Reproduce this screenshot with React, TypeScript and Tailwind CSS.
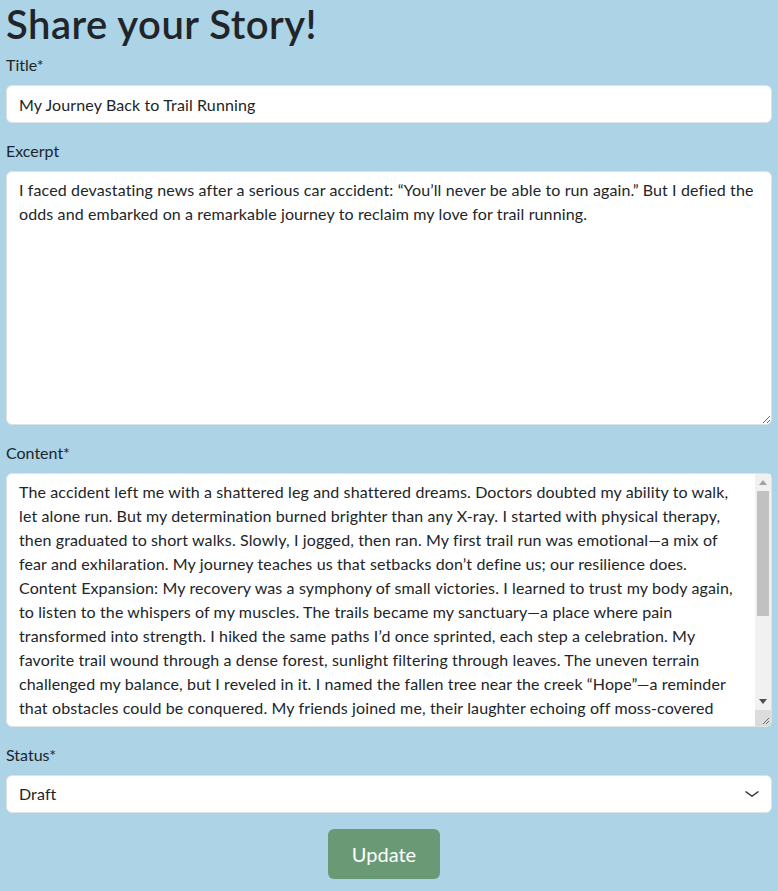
import { useState } from 'react'

const excerptText =
  'I faced devastating news after a serious car accident: “You’ll never be able to run again.” But I defied the odds and embarked on a remarkable journey to reclaim my love for trail running.'

const contentText =
  'The accident left me with a shattered leg and shattered dreams. Doctors doubted my ability to walk, let alone run. But my determination burned brighter than any X-ray. I started with physical therapy, then graduated to short walks. Slowly, I jogged, then ran. My first trail run was emotional—a mix of fear and exhilaration. My journey teaches us that setbacks don’t define us; our resilience does. Content Expansion: My recovery was a symphony of small victories. I learned to trust my body again, to listen to the whispers of my muscles. The trails became my sanctuary—a place where pain transformed into strength. I hiked the same paths I’d once sprinted, each step a celebration. My favorite trail wound through a dense forest, sunlight filtering through leaves. The uneven terrain challenged my balance, but I reveled in it. I named the fallen tree near the creek “Hope”—a reminder that obstacles could be conquered. My friends joined me, their laughter echoing off moss-covered rocks. As my leg healed, I ran farther each week, and every finish line reminded me how far I had come.'

// shared bootstrap-ish control look
const control =
  'block w-full rounded-[6px] border border-[#dee2e6] bg-white px-3 py-[6px] text-[16px] leading-6 tracking-[0.12px] text-[#212529] outline-none'

// the headless browser hides native scrollbars, so draw the classic one on top
function FakeScrollbar() {
  return (
    <>
      <div className="pointer-events-none absolute right-[1px] top-[1px] bottom-[17px] flex w-[16px] flex-col bg-[#f1f1f1]">
        <div className="flex h-[17px] items-center justify-center">
          <svg width="8" height="5" viewBox="0 0 8 5">
            <path d="M0 5h8L4 0z" fill="#a3a3a3" />
          </svg>
        </div>
        <div className="flex-1 px-[2px]">
          <div className="h-[125px] bg-[#c1c1c1]" />
        </div>
        <div className="flex h-[17px] items-center justify-center">
          <svg width="8" height="5" viewBox="0 0 8 5">
            <path d="M0 0h8L4 5z" fill="#505050" />
          </svg>
        </div>
      </div>
      <div className="pointer-events-none absolute right-[1px] bottom-[1px] h-[16px] w-[16px] bg-[#dcdcdc]">
        <svg width="16" height="16" viewBox="0 0 16 16" stroke="#6b6b6b" strokeWidth="1">
          <path d="M14 8 8 14M14 11l-3 3" />
        </svg>
      </div>
    </>
  )
}

export default function App() {
  const [title, setTitle] = useState('My Journey Back to Trail Running')
  const [excerpt, setExcerpt] = useState(excerptText)
  const [content, setContent] = useState(contentText)
  const [status, setStatus] = useState('draft')

  return (
    <div className="min-h-[891px] bg-[#acd3e6] px-[6px] font-['Lato','Noto_Sans',sans-serif] text-[#212529]">
      <h1 className="mb-[5px] text-[40px] font-semibold leading-[48px] tracking-[0.5px]">Share your Story!</h1>

      <form onSubmit={(e) => e.preventDefault()}>
        <div className="mb-4">
          <label className="mb-2 block text-[16px] leading-6">Title*</label>
          <input className={control + ' h-[38px]'} value={title} onChange={(e) => setTitle(e.target.value)} />
        </div>

        <div className="mb-4">
          <label className="mb-2 block text-[16px] leading-6">Excerpt</label>
          <textarea
            className={control + ' h-[254px]'}
            value={excerpt}
            onChange={(e) => setExcerpt(e.target.value)}
          />
        </div>

        <div className="mb-4">
          <label className="mb-2 block text-[16px] leading-6">Content*</label>
          <div className="relative">
            <textarea
              className={control + ' h-[254px] overflow-hidden pr-[23px]'}
              value={content}
              onChange={(e) => setContent(e.target.value)}
            />
            <FakeScrollbar />
          </div>
        </div>

        <div className="mb-4">
          <label className="mb-2 block text-[16px] leading-6">Status*</label>
          <div className="relative">
            <select
              className={control + ' h-[38px] appearance-none pr-9'}
              value={status}
              onChange={(e) => setStatus(e.target.value)}
            >
              <option value="draft">Draft</option>
              <option value="published">Published</option>
            </select>
            <svg
              className="pointer-events-none absolute right-3 top-1/2 h-3 w-4 -translate-y-1/2"
              viewBox="0 0 16 16"
              preserveAspectRatio="none"
              fill="none"
              stroke="#343a40"
              strokeWidth="1.5"
              strokeLinecap="round"
              strokeLinejoin="round"
            >
              <path d="m2 5 6 6 6-6" />
            </svg>
          </div>
        </div>

        <div className="flex justify-center pr-[10px]">
          <button
            type="submit"
            className="h-[50px] rounded-[6px] bg-[#6a9a75] px-6 text-[20px] leading-[30px] text-white"
          >
            Update
          </button>
        </div>
      </form>
    </div>
  )
}
